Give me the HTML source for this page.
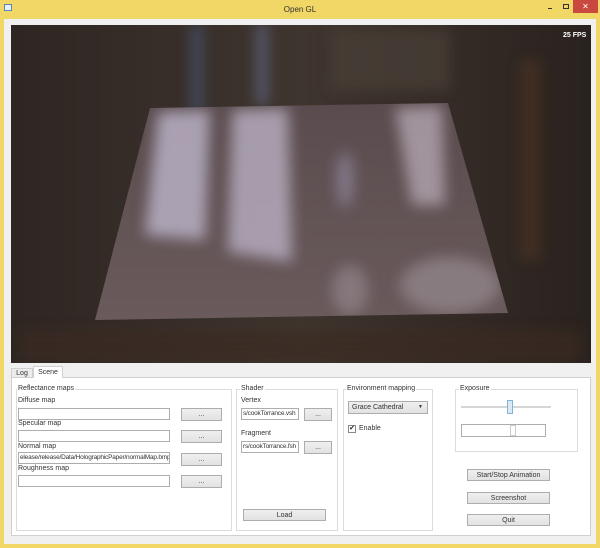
<!DOCTYPE html>
<html><head><style>
*{margin:0;padding:0;box-sizing:border-box}
body{width:600px;height:548px;background:#f0d766;font-family:"Liberation Sans",sans-serif;font-size:7px;color:#333;position:relative;overflow:hidden}
.a{position:absolute}
.client{left:4px;top:19px;width:592px;height:525px;background:#f0f0f0}
.tb{background:#fff;border:1px solid #abadb3;font-size:6.5px;line-height:10px;padding-left:1px;white-space:nowrap;overflow:hidden;letter-spacing:-0.2px}
.btn{background:linear-gradient(#efefef,#e2e2e2);border:1px solid #adadad;text-align:center;font-size:7px;line-height:11px;color:#333}
.grp{border:1px solid #dcdcdc}
.gt{background:#f0f0f0;padding:0 1px;font-size:7px;line-height:8px}
.l{font-size:7px;line-height:8px}
</style></head><body>
<div class="a" style="left:0;top:0;width:600px;height:19px;text-align:center;font-size:8px;line-height:19px;color:#333">Open GL</div>
<div class="a" style="left:4px;top:4px;width:8px;height:7px;border:1px solid #5a8ab0;background:#e8eef4"></div>
<div class="a" style="left:548px;top:8px;width:4px;height:1px;background:#333"></div>
<div class="a" style="left:563px;top:4px;width:6px;height:5px;border:1px solid #333"></div>
<div class="a" style="left:573px;top:0;width:25px;height:13px;background:#c9483f;color:#fff;text-align:center;font-size:8px;line-height:13px">✕</div>
<div class="a client"></div>
<svg class="a" style="left:11px;top:25px" width="580" height="338" viewBox="11 25 580 338">
<defs>
<linearGradient id="bg" x1="0" x2="1" y1="0" y2="0"><stop offset="0" stop-color="#2e2622"/><stop offset=".5" stop-color="#3f352f"/><stop offset="1" stop-color="#2a221e"/></linearGradient>
<linearGradient id="qg" x1="0" x2="0" y1="0" y2="1"><stop offset="0" stop-color="#5a4c4e"/><stop offset="1" stop-color="#6a5a5c"/></linearGradient>
<filter id="b"><feGaussianBlur stdDeviation="6"/></filter>
<filter id="b2"><feGaussianBlur stdDeviation="7"/></filter>
<clipPath id="q"><polygon points="150,108 448,103 508,313 95,320"/></clipPath>
</defs>
<rect x="11" y="25" width="580" height="338" fill="url(#bg)"/>
<g filter="url(#b)" opacity=".7">
<rect x="190" y="25" width="14" height="90" fill="#45506a"/>
<rect x="255" y="25" width="14" height="80" fill="#5a6078"/>
<rect x="330" y="30" width="120" height="60" fill="#4a4038"/>
<rect x="20" y="330" width="560" height="33" fill="#3a2c22"/>
<rect x="520" y="60" width="20" height="200" fill="#4a3020"/>
</g>
<polygon points="150,108 448,103 508,313 95,320" fill="url(#qg)"/>
<g clip-path="url(#q)">
<g filter="url(#b2)" opacity=".85">
<polygon points="158,112 210,110 205,240 145,235" fill="#b8b0c4"/>
<polygon points="232,110 288,108 292,262 228,252" fill="#b4aabc"/>
<polygon points="395,108 442,106 445,205 412,205" fill="#ada0aa"/>
<ellipse cx="345" cy="180" rx="8" ry="28" fill="#8a8296"/>
<ellipse cx="450" cy="285" rx="50" ry="28" fill="#8e8286"/>
<ellipse cx="350" cy="290" rx="18" ry="25" fill="#8a7e82"/>
</g>
</g>
<text x="563" y="37" font-size="7" font-weight="bold" fill="#fff" font-family="Liberation Sans">25 FPS</text>
</svg>
<div class="a" style="left:11px;top:368px;width:22px;height:10px;border:1px solid #d0d0d0;border-bottom:none;background:#ececec;font-size:7px;line-height:10px;text-align:center">Log</div>
<div class="a" style="left:33px;top:366px;width:30px;height:12px;border:1px solid #d0d0d0;border-bottom:none;background:#fff;font-size:7px;line-height:12px;text-align:center">Scene</div>
<div class="a" style="left:11px;top:377px;width:580px;height:159px;border:1px solid #d0d0d0;background:#fff"></div>
<div class="a" style="left:34px;top:377px;width:28px;height:1px;background:#fff"></div>
<div class="a grp" style="left:16px;top:389px;width:216px;height:142px"></div>
<div class="a gt" style="left:17px;top:385px;background:#fff">Reflectance maps</div>
<div class="a l" style="left:18px;top:397px">Diffuse map</div>
<div class="a tb" style="left:18px;top:408px;width:152px;height:12px"></div>
<div class="a btn" style="left:181px;top:408px;width:41px;height:13px">...</div>
<div class="a l" style="left:18px;top:420px">Specular map</div>
<div class="a tb" style="left:18px;top:430px;width:152px;height:12px"></div>
<div class="a btn" style="left:181px;top:430px;width:41px;height:13px">...</div>
<div class="a l" style="left:18px;top:443px">Normal map</div>
<div class="a tb" style="left:18px;top:452px;width:152px;height:12px">elease/release/Data/HolographicPaper/normalMap.bmp</div>
<div class="a btn" style="left:181px;top:453px;width:41px;height:13px">...</div>
<div class="a l" style="left:18px;top:465px">Roughness map</div>
<div class="a tb" style="left:18px;top:475px;width:152px;height:12px"></div>
<div class="a btn" style="left:181px;top:475px;width:41px;height:13px">...</div>
<div class="a grp" style="left:236px;top:389px;width:102px;height:142px"></div>
<div class="a gt" style="left:240px;top:385px;background:#fff">Shader</div>
<div class="a l" style="left:241px;top:397px">Vertex</div>
<div class="a tb" style="left:241px;top:408px;width:58px;height:12px">s/cookTorrance.vsh</div>
<div class="a btn" style="left:304px;top:408px;width:28px;height:13px">...</div>
<div class="a l" style="left:241px;top:430px">Fragment</div>
<div class="a tb" style="left:241px;top:441px;width:58px;height:12px">rs/cookTorrance.fsh</div>
<div class="a btn" style="left:304px;top:441px;width:28px;height:13px">...</div>
<div class="a btn" style="left:243px;top:509px;width:83px;height:12px">Load</div>
<div class="a grp" style="left:343px;top:389px;width:90px;height:142px"></div>
<div class="a gt" style="left:346px;top:385px;background:#fff">Environment mapping</div>
<div class="a btn" style="left:348px;top:401px;width:80px;height:13px;text-align:left;padding-left:3px">Grace Cathedral<span style="position:absolute;right:4px;font-size:5px">▼</span></div>
<div class="a" style="left:348px;top:425px;width:8px;height:8px;border:1px solid #888;background:#fff;font-size:7px;line-height:6px;text-align:center;color:#222">✔</div>
<div class="a l" style="left:359px;top:425px">Enable</div>
<div class="a grp" style="left:455px;top:389px;width:123px;height:63px"></div>
<div class="a gt" style="left:459px;top:385px;background:#fff">Exposure</div>
<div class="a" style="left:461px;top:406px;width:90px;height:2px;background:#d6d6d6"></div>
<div class="a" style="left:507px;top:400px;width:6px;height:14px;background:#dce8f2;border:1px solid #7eb4d8"></div>
<div class="a tb" style="left:461px;top:424px;width:85px;height:13px"></div>
<div class="a" style="left:510px;top:425px;width:6px;height:11px;border:1px solid #ccc"></div>
<div class="a btn" style="left:467px;top:469px;width:83px;height:12px">Start/Stop Animation</div>
<div class="a btn" style="left:467px;top:492px;width:83px;height:12px">Screenshot</div>
<div class="a btn" style="left:467px;top:514px;width:83px;height:12px">Quit</div>
</body></html>
